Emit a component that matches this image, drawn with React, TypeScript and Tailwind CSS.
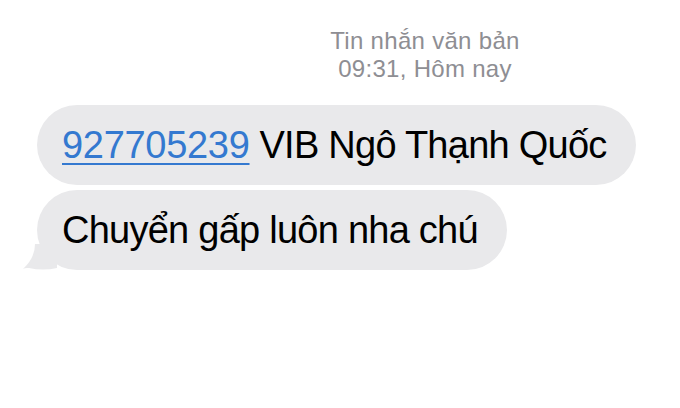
import React from 'react';

const font = { fontFamily: '"Liberation Sans", Arial, sans-serif' };

function Bubble({ children, tail = false }: { children: React.ReactNode; tail?: boolean }) {
  return (
    <div className="relative self-start">
      <div className="h-[80px] flex items-center pl-[25px] pr-[29px] rounded-[40px] bg-[#e9e9eb] text-[38px] tracking-[-0.75px] text-black leading-none">
        {children}
      </div>
      {tail && (
        <svg className="absolute left-[-14px] bottom-0" width="34" height="26" viewBox="0 0 34 26">
          <path d="M34 0 L34 24 Q20 27 6 24 Q2 23.5 0 25 Q12 14 12 0 Z" fill="#e9e9eb" />
        </svg>
      )}
    </div>
  );
}

export default function App() {
  return (
    <div className="w-[680px] h-[408px] bg-white overflow-hidden flex flex-col" style={font}>
      {/* Header */}
      <div className="pl-[170px] pt-[27px] text-center text-[24px] tracking-[0.3px] leading-[28px] text-[#8e8e93]">
        <div>Tin nhắn văn bản</div>
        <div>09:31, Hôm nay</div>
      </div>

      {/* Messages */}
      <div className="flex flex-col gap-[5px] pl-[37px] mt-[22px]">
        <Bubble>
          <span className="text-[#3479d0] underline decoration-[2px] underline-offset-[5px] tracking-[-0.3px]">927705239</span>
          <span className="ml-[10px]">VIB Ngô Thạnh Quốc</span>
        </Bubble>
        <Bubble tail>Chuyển gấp luôn nha chú</Bubble>
      </div>
    </div>
  );
}
